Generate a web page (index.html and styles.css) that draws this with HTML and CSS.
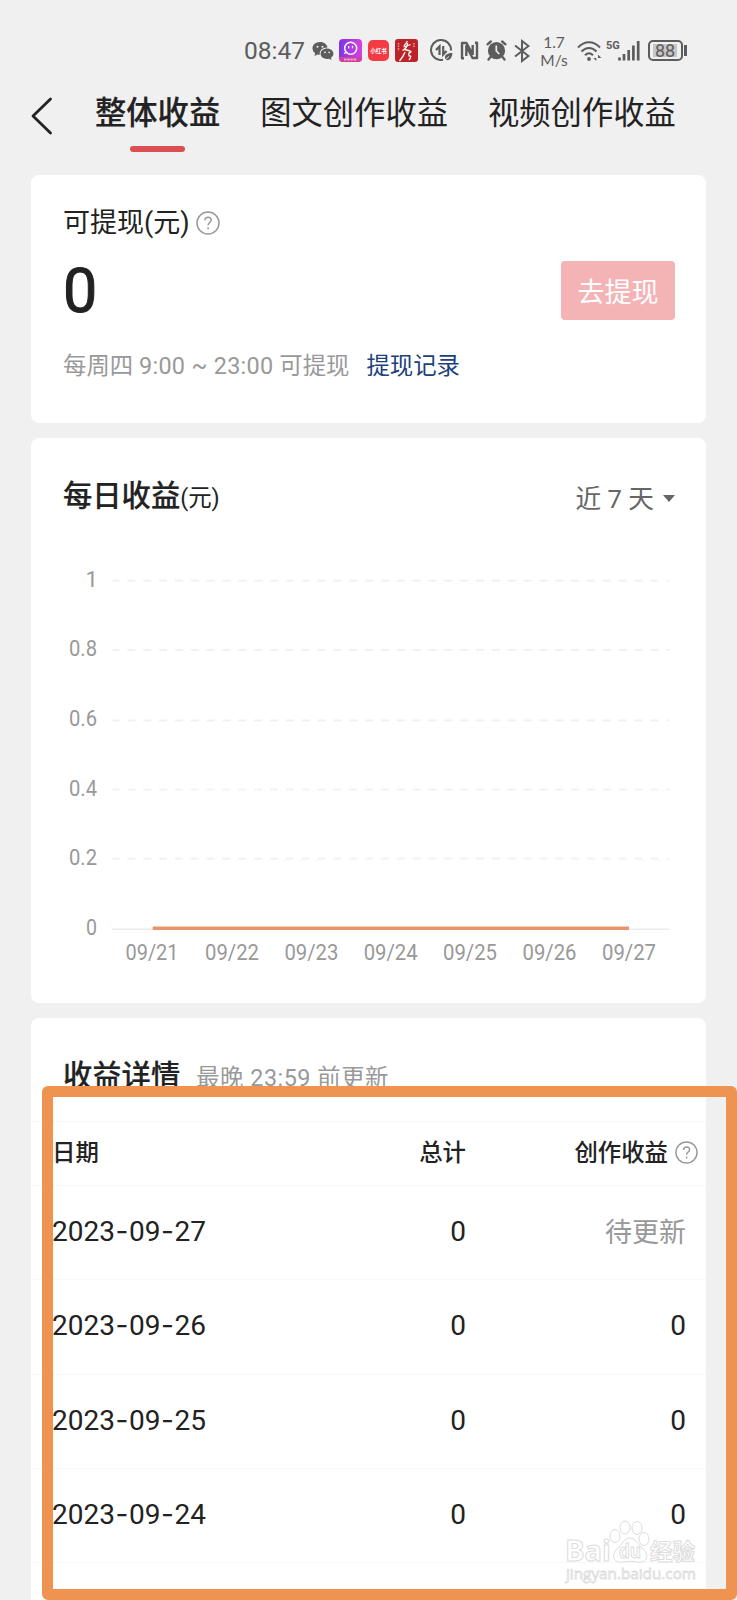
FILE: index.html
```html
<!DOCTYPE html>
<html lang="zh-CN">
<head>
    <meta charset="UTF-8">
    <meta name="viewport" content="width=device-width, initial-scale=1.0">
    <title>整体收益</title>
    <link rel="stylesheet" href="styles.css">
</head>
<body>
    <div class="status-bar">
        <span class="time">08:47</span>
        <svg class="icon wechat" width="22" height="20" viewBox="0 0 22 20">
            <path fill="#5c5c5c" d="M8.2 1C3.8 1 .5 3.8.5 7.3c0 2 1 3.700 2.700 4.900L2.500 15l3-1.500c.7.2 1.500.3 2.300.3-.8-4 2.500-7.300 7.700-7.200C15 3.400 12 1 8.200 1z"/>
            <path fill="#5c5c5c" d="M15 7.600c-3.600 0-6.400 2.300-6.400 5.200S11.400 18 15 18c.7 0 1.400-.1 2-.3l2.500 1.300-.6-2.200c1.500-.9 2.500-2.400 2.500-4 0-2.900-2.800-5.200-6.400-5.200z"/>
            <circle cx="5.500" cy="5.700" r="1" fill="#f0f0f0"/>
            <circle cx="10.500" cy="5.700" r="1" fill="#f0f0f0"/>
            <circle cx="13" cy="11.300" r=".9" fill="#f0f0f0"/>
            <circle cx="17.200" cy="11.300" r=".9" fill="#f0f0f0"/>
        </svg>
        <svg class="icon app-purple" width="23" height="23" viewBox="0 0 23 23">
            <defs>
                <linearGradient id="purple" x1="0" x2="1">
                    <stop offset="0" stop-color="#7b35e8"/>
                    <stop offset="1" stop-color="#d83fe0"/>
                </linearGradient>
            </defs>
            <rect width="23" height="23" rx="4" fill="url(#purple)"/>
            <path d="M0 18h23v1a4 4 0 0 1-4 4H4a4 4 0 0 1-4-4z" fill="#d0409f"/>
            <circle cx="11.700" cy="9.300" r="6" fill="none" stroke="#fff" stroke-width="1.500"/>
            <path d="M9.700 7v2.500M13.500 6.700v2.500M5 14.500l3.500-1.500" fill="none" stroke="#fff" stroke-width="1.300"/>
            <path d="M5 20.500h13" stroke="#f0a5cc" stroke-width="1.800" stroke-dasharray="2.500 .7"/>
        </svg>
        <svg class="icon app-red" width="21" height="21" viewBox="0 0 21 21">
            <rect width="21" height="21" rx="5" fill="#f33b44"/>
            <text x="10.500" y="12.700" font-size="6" font-weight="700" fill="#fff" text-anchor="middle" textLength="16.500" lengthAdjust="spacingAndGlyphs">小红书</text>
        </svg>
        <svg class="icon app-dark" width="23" height="23" viewBox="0 0 23 23">
            <rect width="23" height="23" rx="3" fill="#bd2229"/>
            <path d="M12.500 2 9 7M8.500 8l7-2.500M12.500 4c0 4-2 6-5 7.500M9.500 10.500l6 1.500M10 13c-1 3-3 6-5.500 9M13.500 14.500l3-2M14.500 13c-1 2-1 3-.5 4 2-1 2.500 1 0 4" fill="none" stroke="#fff" stroke-width="1.300"/>
            <path d="M3.500 4v8M19 4v4" stroke="#e79a9c" stroke-width="1.500" stroke-dasharray="1.500 1"/>
        </svg>
        <svg class="icon data" width="23" height="23" viewBox="0 0 23 23">
            <path d="M13 20.800A10 10 0 1 1 21 11.500" fill="none" stroke="#5c5c5c" stroke-width="2"/>
            <path d="M9.500 16V7.500L6 11M13.200 7v8.500L16.500 12" fill="none" stroke="#5c5c5c" stroke-width="2.200"/>
            <path d="M22.500 14c-5 0-7.500 1.500-7.500 4.500 0 1 .3 1.700.8 2.300 4 1.500 6.200-2.300 6.700-6.800z" fill="#5c5c5c"/>
            <path d="M14 22l5-4.500" stroke="#f0f0f0" stroke-width="1"/>
        </svg>
        <svg class="icon nfc" width="19" height="19" viewBox="0 0 19 19">
            <path d="M4 17.200H2V2h4.500l6.500 12M15 1.800h2V17h-4.500L6.300 5v10M12.700 14V4" fill="none" stroke="#5c5c5c" stroke-width="2.400" stroke-linejoin="round"/>
        </svg>
        <svg class="icon alarm" width="21" height="21" viewBox="0 0 21 21">
            <circle cx="10.500" cy="10.700" r="8.600" fill="#5c5c5c"/>
            <path d="M1.500 4.300 4.800 1.500M19.500 4.300 16.200 1.500M4.500 17l-2 2.500M16.500 17l2 2.500" stroke="#5c5c5c" stroke-width="2.300" stroke-linecap="round"/>
            <path d="M10.300 5.500v5.500l3 3" fill="none" stroke="#f0f0f0" stroke-width="1.700"/>
        </svg>
        <svg class="icon bluetooth" width="16" height="24" viewBox="0 0 16 24">
            <path d="M1 6.500 14.500 17 8 22V2l6.500 5L1 17.500" fill="none" stroke="#5c5c5c" stroke-width="2"/>
        </svg>
        <span class="speed">1.7<br>M/s</span>
        <svg class="icon wifi" width="25" height="22" viewBox="0 0 25 22">
            <path d="M1 7.500c6.500-7 15.500-7 22 0M4.500 11.500c4.500-4.700 10.500-4.700 15 0M8 15.200c2.500-2.400 5.500-2.400 8 0" fill="none" stroke="#5c5c5c" stroke-width="2"/>
            <circle cx="12" cy="19" r="1.900" fill="#5c5c5c"/>
            <path d="M19.300 14.500v6.500l-3-3h3M21 21v-6.500l3.300 3.500H21" fill="#5c5c5c"/>
        </svg>
        <span class="network">5G</span>
        <svg class="icon signal" width="22" height="21" viewBox="0 0 22 21">
            <path d="M1.500 17.500v3M6 14v6.500M10.700 10v10.500M15.400 5.500v15M20.200 1v19.500" stroke="#5c5c5c" stroke-width="2.700"/>
        </svg>
        <div class="battery"><span>88</span></div>
    </div>

    <div class="nav">
        <svg class="back" width="22" height="38" viewBox="0 0 22 38">
            <path d="M19.500 2 2 19l17.500 17" fill="none" stroke="#222" stroke-width="2.800" stroke-linecap="round" stroke-linejoin="round"/>
        </svg>
        <div class="tab active">整体收益</div>
        <div class="tab">图文创作收益</div>
        <div class="tab">视频创作收益</div>
    </div>

    <div class="card balance">
        <div class="balance-title">
            可提现(元)
            <svg class="help" width="24" height="24" viewBox="0 0 24 24">
                <circle cx="12" cy="12" r="11" fill="none" stroke="#999" stroke-width="1.500"/>
                <path d="M8.900 9.300c.2-4 6.300-4 6.300-.3 0 2.500-3.100 2.500-3.100 5.300M12.100 16.200v2" fill="none" stroke="#999" stroke-width="1.500"/>
            </svg>
        </div>
        <div class="balance-row">
            <span class="amount">0</span>
            <button class="withdraw">去提现</button>
        </div>
        <div class="balance-note">
            <span>每周四 <span class="hours">9:00 ~ 23:00</span> 可提现</span>
            <a class="record">提现记录</a>
        </div>
    </div>

    <div class="card daily">
        <div class="daily-head">
            <h2>每日收益<small>(元)</small></h2>
            <span class="range">近 7 天<i class="caret"></i></span>
        </div>
        <svg class="chart" width="675" height="420" viewBox="31 560 675 420">
            <g stroke="#f0f0f0" stroke-width="1.700" stroke-dasharray="8 7.850" stroke-dashoffset="1">
                <path d="M112.500 580.700H669"/>
                <path d="M112.500 649.800H669"/>
                <path d="M112.500 720.300H669"/>
                <path d="M112.500 789.500H669"/>
                <path d="M112.500 858.700H669"/>
            </g>
            <path d="M112 929.300h557" stroke="#ebebeb" stroke-width="1.500"/>
            <path d="M152.700 928.300h476.300" stroke="#e8956b" stroke-width="3.500"/>
            <g class="axis">
                <text x="85.500" y="586.500">1</text>
                <text x="69" y="656" textLength="28" lengthAdjust="spacingAndGlyphs">0.8</text>
                <text x="69" y="726" textLength="28" lengthAdjust="spacingAndGlyphs">0.6</text>
                <text x="69" y="795.500" textLength="28" lengthAdjust="spacingAndGlyphs">0.4</text>
                <text x="69" y="865" textLength="28" lengthAdjust="spacingAndGlyphs">0.2</text>
                <text x="86" y="934.500" textLength="11" lengthAdjust="spacingAndGlyphs">0</text>
                <text x="125.500" y="960" textLength="53" lengthAdjust="spacingAndGlyphs">09/21</text>
                <text x="205" y="960" textLength="54" lengthAdjust="spacingAndGlyphs">09/22</text>
                <text x="284.400" y="960" textLength="54" lengthAdjust="spacingAndGlyphs">09/23</text>
                <text x="363.700" y="960" textLength="54" lengthAdjust="spacingAndGlyphs">09/24</text>
                <text x="443" y="960" textLength="54" lengthAdjust="spacingAndGlyphs">09/25</text>
                <text x="522.500" y="960" textLength="54" lengthAdjust="spacingAndGlyphs">09/26</text>
                <text x="602" y="960" textLength="54" lengthAdjust="spacingAndGlyphs">09/27</text>
            </g>
        </svg>
    </div>

    <div class="card detail">
        <div class="detail-head">
            <h2>收益详情</h2>
            <span>最晚 23:59 前更新</span>
        </div>
        <div class="row head">
            <span>日期</span>
            <span>总计</span>
            <span class="with-help">创作收益
                <svg class="help" width="23" height="23" viewBox="0 0 24 24">
                    <circle cx="12" cy="12" r="11" fill="none" stroke="#999" stroke-width="1.500"/>
                    <path d="M8.900 9.300c.2-4 6.300-4 6.300-.3 0 2.500-3.100 2.500-3.100 5.300M12.100 16.200v2" fill="none" stroke="#999" stroke-width="1.500"/>
                </svg>
            </span>
        </div>
        <div class="row"><span>2023<b>-</b>09<b>-</b>27</span><span>0</span><span class="pending">待更新</span></div>
        <div class="row"><span>2023<b>-</b>09<b>-</b>26</span><span>0</span><span>0</span></div>
        <div class="row"><span>2023<b>-</b>09<b>-</b>25</span><span>0</span><span>0</span></div>
        <div class="row"><span>2023<b>-</b>09<b>-</b>24</span><span>0</span><span>0</span></div>
    </div>

    <div class="highlight"></div>

    <svg class="watermark" width="140" height="66" viewBox="0 0 140 66">
        <g fill="#fff" stroke="#dcdcdc" stroke-width="1">
            <text x="1" y="41" font-size="29" font-weight="700" textLength="46" lengthAdjust="spacingAndGlyphs">Bai</text>
            <ellipse cx="51" cy="16" rx="5" ry="6.500"/>
            <ellipse cx="61" cy="7.500" rx="5" ry="6.500"/>
            <ellipse cx="73" cy="8" rx="5" ry="6.500"/>
            <ellipse cx="80" cy="19" rx="5" ry="6.500"/>
            <path d="M66 18c6 0 8 7 13 11 8 7 2 15-5 13-5-1-10-1-15 0-8 2-13-6-6-13 5-4 7-11 13-11z"/>
            <text x="55" y="38" font-size="19" font-weight="700" textLength="22" lengthAdjust="spacingAndGlyphs">du</text>
            <text x="86" y="40" font-size="23" font-weight="700" textLength="45" lengthAdjust="spacingAndGlyphs">经验</text>
            <text x="2" y="59" font-size="15" stroke-width=".8" textLength="130" lengthAdjust="spacingAndGlyphs">jingyan.baidu.com</text>
        </g>
    </svg>
</body>
</html>
```

FILE: styles.css
```css
* {
    box-sizing: border-box;
}
body {
    position: relative;
    margin: 0;
    width: 737px;
    height: 1600px;
    overflow: hidden;
    background: #f0f0f0;
    color: #222;
    font-family: Roboto, "Noto Sans CJK SC", sans-serif;
}
h2 {
    margin: 0;
    font-size: 29.3px;
    font-weight: 500;
    line-height: 40px;
    -webkit-text-stroke: 0.2px #222;
}

/* status bar */
.status-bar {
    display: flex;
    align-items: center;
    height: 80px;
    padding: 21px 0 0 244px;
    color: #5c5c5c;
}
.icon {
    flex: none;
}
.time {
    width: 68px;
    font-size: 24.5px;
}
.app-purple {
    margin-left: 5px;
}
.app-red {
    margin-left: 6px;
}
.app-dark {
    margin-left: 6px;
}
.data {
    margin-left: 12px;
}
.nfc {
    margin-left: 7px;
}
.alarm {
    margin-left: 7px;
}
.bluetooth {
    margin-left: 7px;
}
.speed {
    width: 32px;
    margin-left: 8px;
    font: 15.5px/18px Lato, sans-serif;
    text-align: center;
}
.wifi {
    margin-left: 7px;
}
.network {
    align-self: flex-start;
    width: 14px;
    margin: 18px 0 0 4px;
    font-size: 11px;
    font-weight: 700;
    line-height: 13px;
}
.signal {
    margin-left: -2px;
}
.battery {
    position: relative;
    width: 35px;
    height: 21px;
    margin-left: 8px;
    padding: 2px 3px;
    border: 2px solid #5c5c5c;
    border-radius: 5px;
}
.battery span {
    display: block;
    width: 24px;
    background: #c6c6c6;
    font-size: 18px;
    line-height: 13px;
    text-align: center;
}
.battery::after {
    content: "";
    position: absolute;
    top: 3px;
    right: -6px;
    width: 3px;
    height: 11px;
    background: #5c5c5c;
}

/* tabs */
.nav {
    display: flex;
    height: 95px;
    padding-left: 31px;
}
.back {
    margin-top: 17px;
}
.tab {
    position: relative;
    margin: 12px 0 0 40px;
    font-size: 31.3px;
    line-height: 44px;
    white-space: nowrap;
}
.tab.active {
    margin-left: 42px;
    font-weight: 500;
    -webkit-text-stroke: 0.2px #222;
}
.tab.active::after {
    content: "";
    position: absolute;
    left: 35px;
    top: 54px;
    width: 55px;
    height: 6px;
    border-radius: 3px;
    background: #dc4f50;
}

/* cards */
.card {
    width: 675px;
    margin: 0 0 15px 31px;
    border-radius: 8px;
    background: #fff;
}
.balance {
    height: 248px;
    padding: 25px 31px 0 32px;
}
.balance-title {
    display: flex;
    align-items: center;
    height: 40px;
    font-size: 27px;
}
.balance-title .help {
    margin: 5px 0 0 6px;
}
.balance-row {
    display: flex;
    justify-content: space-between;
    align-items: center;
    height: 60px;
    margin-top: 20px;
}
.amount {
    padding-top: 2px;
    font: 400 61px/60px Roboto, sans-serif;
    -webkit-text-stroke: 1px #222;
}
.withdraw {
    width: 114px;
    height: 59px;
    padding: 0;
    border: none;
    border-radius: 4px;
    background: #f4b3b5;
    color: #fff;
    font-family: inherit;
    font-size: 27px;
}
.balance-note {
    display: flex;
    margin-top: 30px;
    color: #999;
    font-size: 23.4px;
    line-height: 32px;
}
.hours {
    letter-spacing: 0.3px;
}
.record {
    margin-left: 17px;
    color: #213f7b;
}
.daily {
    height: 565px;
}
.daily-head {
    display: flex;
    justify-content: space-between;
    height: 122px;
    padding: 38px 31px 0 32px;
}
.daily-head small {
    font-size: 23.4px;
    font-weight: 400;
    -webkit-text-stroke: 0;
}
.range {
    display: flex;
    align-items: center;
    height: 40px;
    color: #666;
    font-size: 25.7px;
}
.caret {
    margin: 4px 0 0 9px;
    border: 6px solid transparent;
    border-top: 7px solid #666;
    border-bottom: 0;
}
.chart {
    display: block;
}
.axis {
    fill: #999;
    font-size: 22px;
}

/* table */
.detail {
    height: 600px;
    margin-bottom: 0;
}
.detail-head {
    display: flex;
    align-items: baseline;
    height: 104px;
    padding: 38px 0 0 32px;
    border-bottom: 1px solid #f8f8f8;
}
.detail-head span {
    margin-left: 16px;
    color: #999;
    font-size: 23.4px;
    letter-spacing: 0.5px;
}
.row {
    display: grid;
    grid-template-columns: 214px 200px 220px;
    align-items: center;
    height: 94.300px;
    padding: 0 0 2px 21px;
    border-bottom: 1px solid #f8f8f8;
    font-size: 28px;
}
.row span + span {
    text-align: right;
}
.row b {
    display: inline-block;
    width: 14px;
    font: 400 28px/28px Inter, sans-serif;
    text-align: center;
}
.row.head {
    height: 64px;
    padding-bottom: 5px;
    font-size: 23.4px;
    font-weight: 500;
}
.row .with-help {
    display: flex;
    justify-content: flex-end;
    align-items: center;
    margin-right: -12px;
}
.with-help .help {
    margin: 2px 0 0 7px;
}
.row .pending {
    padding-bottom: 3px;
    color: #999;
    font-size: 27px;
}

/* marker frame drawn over the table */
.highlight {
    position: absolute;
    left: 42px;
    top: 1086px;
    width: 695px;
    height: 514px;
    border: 11.500px solid #ee9350;
    border-radius: 6px;
}
.watermark {
    position: absolute;
    left: 564px;
    top: 1520px;
    font-family: "Open Sans", "Noto Sans CJK SC", sans-serif;
}
```
